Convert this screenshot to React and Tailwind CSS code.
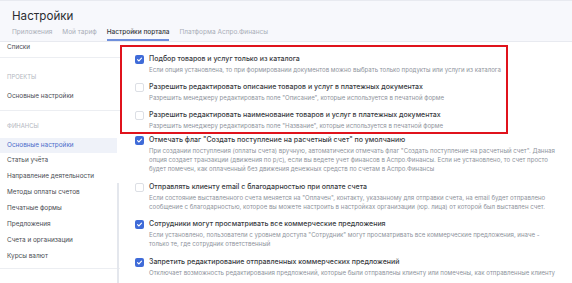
import React from "react";

const tabs = ["Приложения", "Мой тариф", "Настройки портала", "Платформа Аспро.Финансы"];

const financeItems = [
  "Статьи учёта",
  "Направление деятельности",
  "Методы оплаты счетов",
  "Печатные формы",
  "Предложения",
  "Счета и организации",
  "Курсы валют",
];

function Checkbox({ checked }) {
  if (!checked) {
    return <div className="w-[9px] h-[9px] shrink-0 mt-[0.5px] rounded-[2px] border border-[#dcdfe5] bg-white" />;
  }
  return (
    <div className="w-[9px] h-[9px] shrink-0 mt-[0.5px] rounded-[2px] bg-[#3f6bd8] flex items-center justify-center">
      <svg width="7" height="7" viewBox="0 0 10 10" fill="none">
        <path d="M2.2 5.2 L4.2 7.1 L7.9 3" stroke="white" strokeWidth="1.6" strokeLinecap="round" strokeLinejoin="round" />
      </svg>
    </div>
  );
}

function Option({ checked, title, lines, className = "" }) {
  return (
    <div className={`flex gap-[5px] ${className}`}>
      <Checkbox checked={checked} />
      <div>
        <div className="h-[10px] leading-[10px] text-[7px] font-medium text-[#393c42] whitespace-nowrap">{title}</div>
        <div className="mt-[1px] text-[6.1px] leading-[9px] text-[#8e939c]">
          {lines.map((l) => (
            <div key={l} className="whitespace-nowrap">
              {l}
            </div>
          ))}
        </div>
      </div>
    </div>
  );
}

export default function App() {
  return (
    <div className="w-[572px] h-[283px] overflow-hidden bg-white flex flex-col" style={{ fontFamily: "Inter, 'Noto Sans', sans-serif" }}>
      {/* header */}
      <div className="h-[42px] shrink-0 bg-[#f7f8fc] border-t border-b border-[#e8eaf0] px-[12px] flex flex-col">
        <div className="mt-[8px] h-[14px] leading-[14px] text-[11.6px] text-[#2b2d31]">Настройки</div>
        <div className="mt-[2px] flex gap-[10px] text-[6.5px] h-[17px]">
          {tabs.map((t, i) => (
            <div
              key={t}
              className={
                i === 2
                  ? "pt-[3px] border-b-2 border-[#6f8fdc] text-[#34373c] font-medium"
                  : "pt-[3px] text-[#a9aeb8]"
              }
            >
              {t}
            </div>
          ))}
        </div>
      </div>

      <div className="flex flex-1 min-h-0">
        {/* sidebar */}
        <div className="relative w-[120px] shrink-0 text-[6.4px] text-[#4a4d53]">
          <div className="h-[12px] flex items-center pl-[7px]">Списки</div>
          <div className="h-[3px]" />
          <div className="border-t border-[#eceef2]" />
          <div className="h-[11px]" />
          <div className="h-[16px] flex items-center pl-[7px] text-[5.9px] uppercase text-[#b3b7c0]">Проекты</div>
          <div className="h-[4px]" />
          <div className="h-[16px] flex items-center pl-[7px]">Основные настройки</div>
          <div className="h-[5px]" />
          <div className="border-t border-[#eceef2]" />
          <div className="h-[7px]" />
          <div className="h-[16px] flex items-center pl-[7px] text-[5.9px] uppercase text-[#b3b7c0]">Финансы</div>
          <div className="h-[4px]" />
          <div className="h-[15px] flex items-center pl-[7px] bg-[#eff2f9] text-[#4a6cc9] mr-[3px]">Основные настройки</div>
          {financeItems.map((f) => (
            <div key={f} className="h-[16px] flex items-center pl-[7px]">
              {f}
            </div>
          ))}
          <div className="h-[3px]" />
          <div className="border-t border-[#eceef2]" />
          <div className="absolute right-[1px] top-[141px] bottom-0 w-[2px] bg-[#e4e7ed]" />
        </div>

        {/* content */}
        <div className="flex-1">
          <div className="mt-[3px] w-[388px] border-2 border-[#e0131c] pl-[13px] pt-[7px] pb-[2px] flex flex-col gap-[8px]">
            <Option
              checked
              title="Подбор товаров и услуг только из каталога"
              lines={["Если опция установлена, то при формировании документов можно выбрать только продукты или услуги из каталога"]}
            />
            <Option
              title="Разрешить редактировать описание товаров и услуг в платежных документах"
              lines={['Разрешить менеджеру редактировать поле "Описание", которые используется в печатной форме']}
            />
            <Option
              title="Разрешить редактировать наименование товаров и услуг в платежных документах"
              lines={['Разрешить менеджеру редактировать поле "Название", которые используется в печатной форме']}
            />
          </div>
          <div className="pl-[15px] mt-[1px] flex flex-col">
            <Option
              checked
              title={'Отмечать флаг "Создать поступление на расчетный счет" по умолчанию'}
              lines={[
                'При создании поступления (оплаты счета) вручную, автоматически отмечать флаг "Создать поступление на расчетный счет". Данная',
                "опция создает транзакции (движения по р/с), если вы ведете учет финансов в Аспро.Финансы. Если не установлено, то счет просто",
                "будет помечен, как оплаченный без движения денежных средств по счетам в Аспро.Финансы",
              ]}
            />
            <Option
              className="mt-[9px]"
              title="Отправлять клиенту email с благодарностью при оплате счета"
              lines={[
                'Если состояние выставленного счета меняется на "Оплачен", контакту, указанному для отправки счета, на email будет отправлено',
                "сообщение с благодарностью, которое вы можете настроить в настройках организации (юр. лица) от которой был выставлен счет.",
              ]}
            />
            <Option
              checked
              className="mt-[8px]"
              title="Сотрудники могут просматривать все коммерческие предложения"
              lines={[
                'Если установлено, пользователи с уровнем доступа "Сотрудник" могут просматривать все коммерческие предложения, иначе -',
                "только те, где сотрудник ответственный",
              ]}
            />
            <Option
              checked
              className="mt-[9px]"
              title="Запретить редактирование отправленных коммерческих предложений"
              lines={["Отключает возможность редактирования предложений, которые были отправлены клиенту или помечены, как отправленные клиенту"]}
            />
          </div>
        </div>
      </div>
    </div>
  );
}
